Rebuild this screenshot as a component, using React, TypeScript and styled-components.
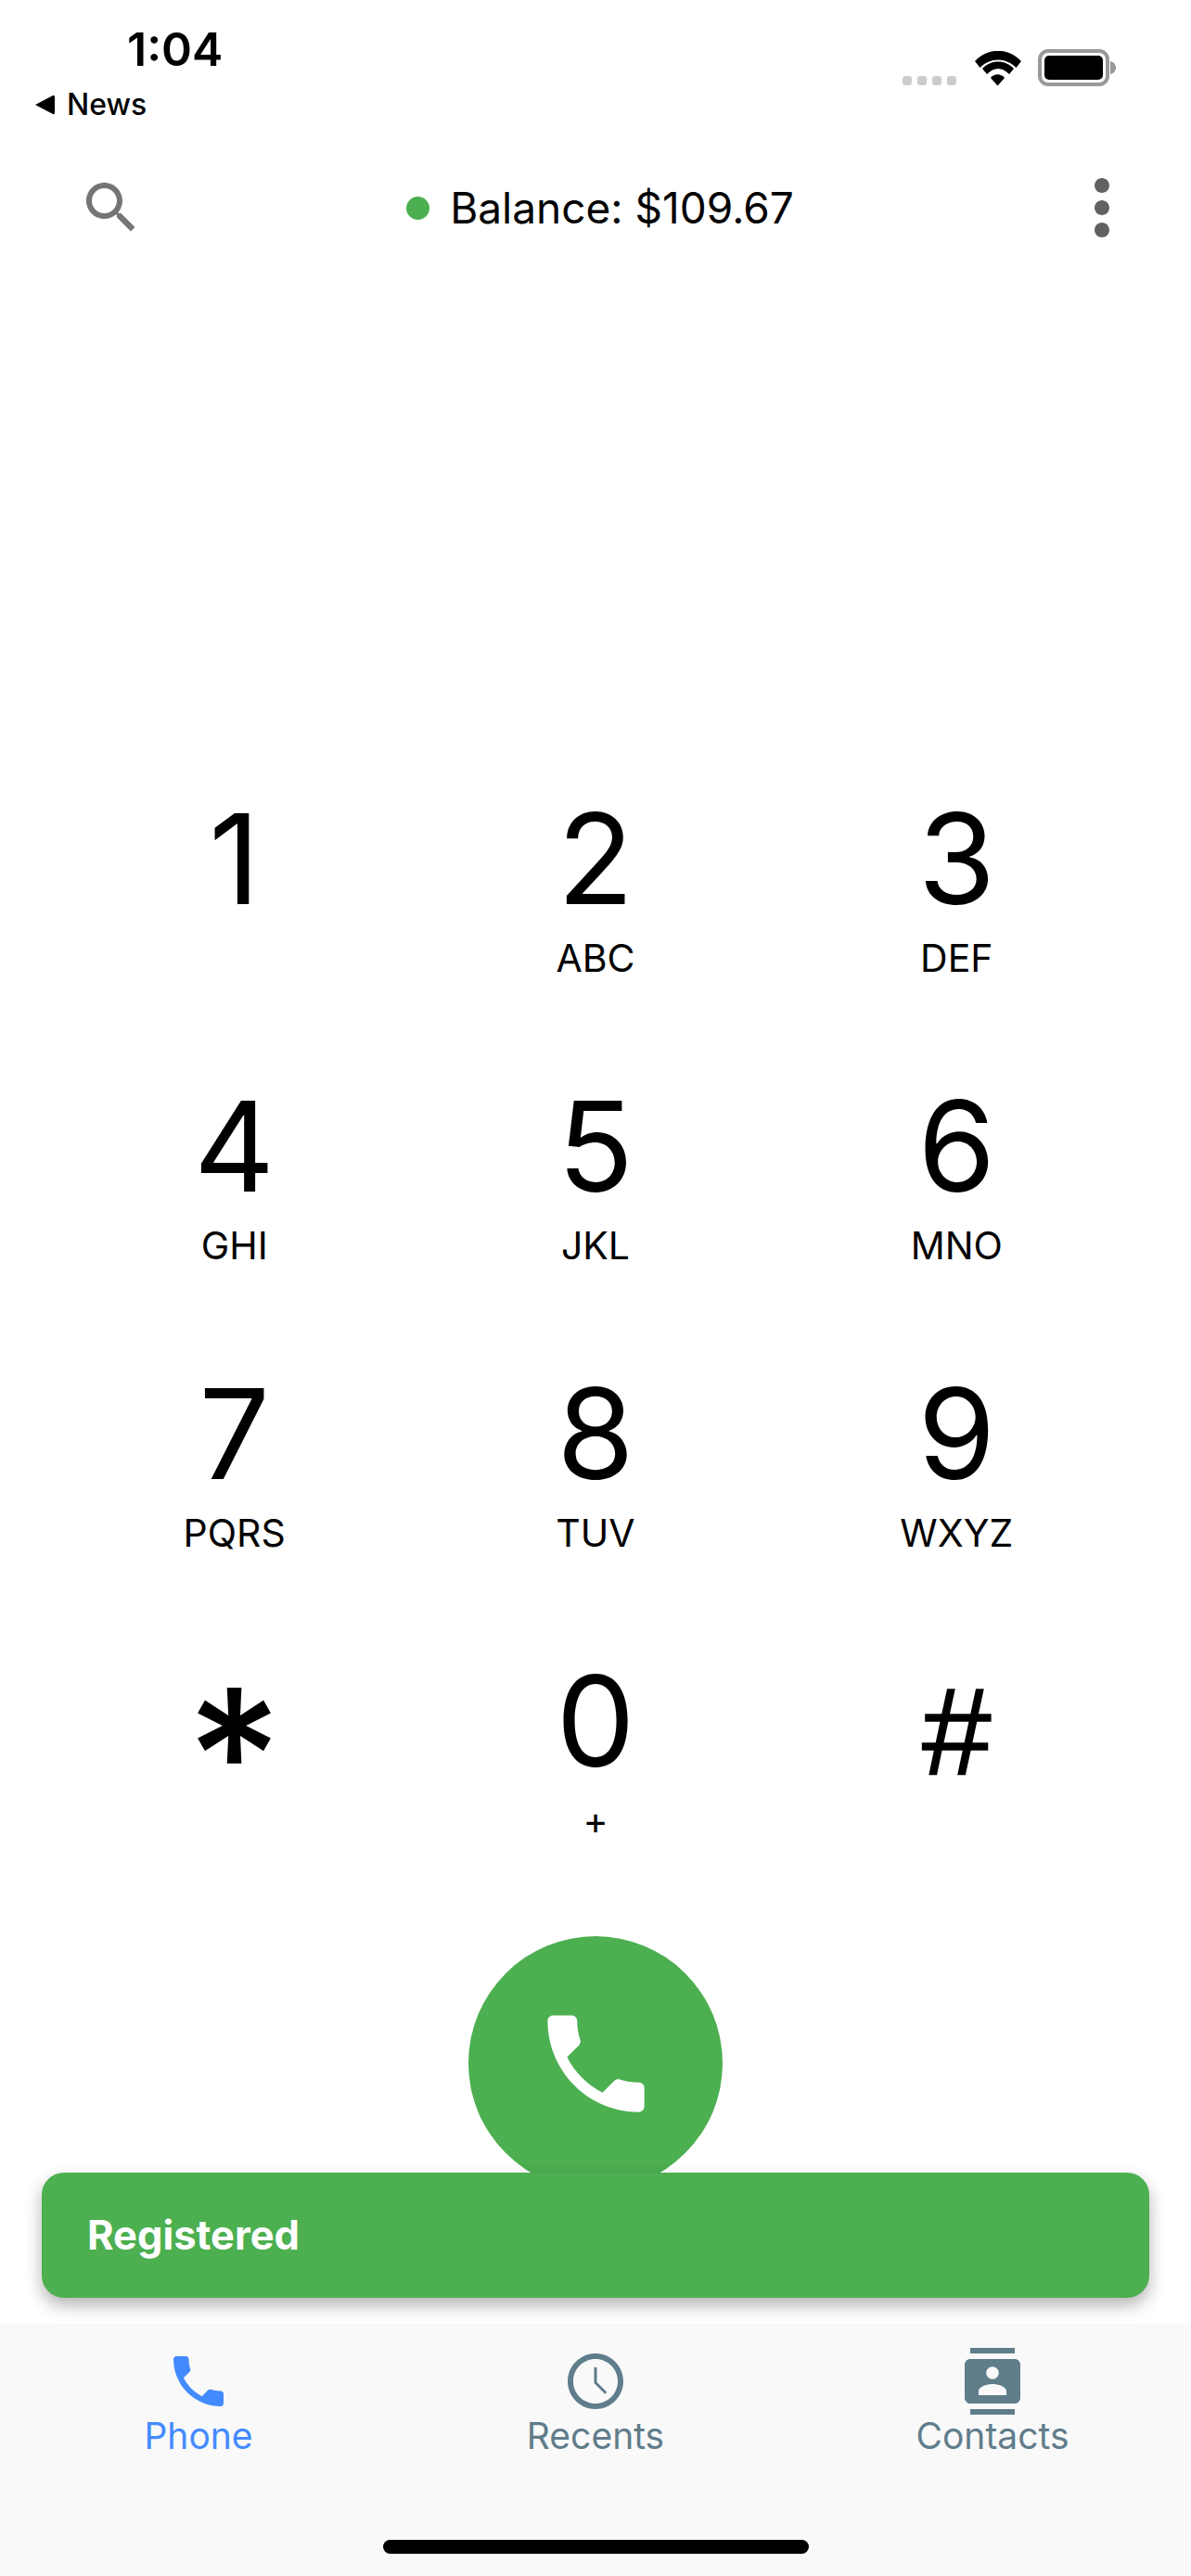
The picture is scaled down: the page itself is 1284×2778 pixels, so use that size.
import styled, { createGlobalStyle, css } from "styled-components";

const keys = [
  { digit: "1", letters: "" },
  { digit: "2", letters: "ABC" },
  { digit: "3", letters: "DEF" },
  { digit: "4", letters: "GHI" },
  { digit: "5", letters: "JKL" },
  { digit: "6", letters: "MNO" },
  { digit: "7", letters: "PQRS" },
  { digit: "8", letters: "TUV" },
  { digit: "9", letters: "WXYZ" },
  { digit: "*", letters: "" },
  { digit: "0", letters: "+" },
  { digit: "#", letters: "" },
];

const CALL_PATH =
  "M6.62 10.79c1.44 2.83 3.76 5.14 6.59 6.59l2.2-2.2c.27-.27.67-.36 1.02-.24 1.12.37 2.33.57 3.57.57.55 0 1 .45 1 1V20c0 .55-.45 1-1 1-9.39 0-17-7.61-17-17 0-.55.45-1 1-1h3.5c.55 0 1 .45 1 1 0 1.25.2 2.45.57 3.57.11.35.03.74-.25 1.02l-2.2 2.2z";

const Icon = ({ size, color, children }: { size: number; color: string; children: React.ReactNode }) => (
  <svg width={size} height={size} viewBox="0 0 24 24" fill={color}>
    {children}
  </svg>
);

const App = () => {
  return (
    <Page>
      <GlobalStyle />
      <StatusBar>
        <StatusLeft>
          <Time>1:04</Time>
          <BackLink>
            <svg width="22" height="22" viewBox="0 0 22 22">
              <path d="M0 11 L19 1 Q21 0 21 3 V19 Q21 22 19 21 Z" fill="#000" />
            </svg>
            News
          </BackLink>
        </StatusLeft>
        <StatusRight>
          <SignalDots>
            <i />
            <i />
            <i />
            <i />
          </SignalDots>
          <svg width="50" height="38" viewBox="0 0 50 38">
            <path d="M0 11 C14 -4 36 -4 50 11 L44.5 18 C33 6.5 17 6.5 5.5 18 Z" fill="#000" />
            <path d="M8 19 C17 9 33 9 42 19 L37 25 C29 17 21 17 13 25 Z" fill="#000" />
            <path d="M17 29 C21 24 28 24 32 29 L24.5 37.5 Z" fill="#000" />
          </svg>
          <svg width="84" height="40" viewBox="0 0 84 40">
            <rect x="2" y="2" width="73" height="36" rx="9" fill="#fff" stroke="#999" strokeWidth="4" />
            <rect x="7" y="7" width="63" height="26" rx="5" fill="#000" />
            <path d="M78 13 C82 14 84 17 84 20 C84 23 82 26 78 27 Z" fill="#999" />
          </svg>
        </StatusRight>
      </StatusBar>

      <TopBar>
        <Icon size={72} color="#757575">
          <path d="M15.5 14h-.79l-.28-.27C15.41 12.59 16 11.11 16 9.5 16 5.91 13.09 3 9.5 3S3 5.91 3 9.5 5.91 16 9.5 16c1.61 0 3.09-.59 4.23-1.57l.27.28v.79l5 4.99L20.49 19l-4.99-5zm-6 0C7.01 14 5 11.99 5 9.5S7.01 5 9.5 5 14 7.01 14 9.5 11.99 14 9.5 14z" />
        </Icon>
        <Balance>
          <OnlineDot />
          Balance: $109.67
        </Balance>
        <Icon size={96} color="#616161">
          <path d="M12 8c1.1 0 2-.9 2-2s-.9-2-2-2-2 .9-2 2 .9 2 2 2zm0 2c-1.1 0-2 .9-2 2s.9 2 2 2 2-.9 2-2-.9-2-2-2zm0 6c-1.1 0-2 .9-2 2s.9 2 2 2 2-.9 2-2-.9-2-2-2z" />
        </Icon>
      </TopBar>

      <Keypad>
        {keys.map((key) => (
          <Key key={key.digit}>
            <Digit $symbol={key.digit}>{key.digit}</Digit>
            <Letters>{key.letters}</Letters>
          </Key>
        ))}
      </Keypad>

      <CallButton>
        <Icon size={139} color="#fff">
          <path d={CALL_PATH} />
        </Icon>
      </CallButton>

      <Snackbar>Registered</Snackbar>

      <BottomNav>
        <NavItems>
          <NavItem $active>
            <Icon size={72} color="#448aff">
              <path d={CALL_PATH} />
            </Icon>
            Phone
          </NavItem>
          <NavItem>
            <Icon size={72} color="#607d8b">
              <path d="M11.99 2C6.47 2 2 6.48 2 12s4.47 10 9.99 10C17.52 22 22 17.52 22 12S17.52 2 11.99 2zM12 20c-4.42 0-8-3.58-8-8s3.58-8 8-8 8 3.58 8 8-3.58 8-8 8z" />
              <path d="M11.5 7h1v5.3l3.6 3.6-.7.7-3.9-3.9z" />
            </Icon>
            Recents
          </NavItem>
          <NavItem>
            <Icon size={72} color="#607d8b">
              <path d="M20 0H4v2h16V0zM4 24h16v-2H4v2zM20 4H4c-1.1 0-2 .9-2 2v12c0 1.1.9 2 2 2h16c1.1 0 2-.9 2-2V6c0-1.1-.9-2-2-2zm-8 2.75c1.24 0 2.25 1.01 2.25 2.25s-1.01 2.25-2.25 2.25S9.75 10.24 9.75 9 10.76 6.75 12 6.75zM17 17H7v-1.5c0-1.67 3.33-2.5 5-2.5s5 .83 5 2.5V17z" />
            </Icon>
            Contacts
          </NavItem>
        </NavItems>
        <HomeIndicator />
      </BottomNav>
    </Page>
  );
};

const GlobalStyle = createGlobalStyle`
  body {
    margin: 0;
    background: #fff;
    font-family: Inter, "Liberation Sans", sans-serif;
  }
`;

const Page = styled.div`
  position: relative;
  width: 1284px;
  height: 2778px;
  overflow: hidden;
  display: flex;
  flex-direction: column;
  background: #fff;
  color: #000;
`;

const StatusBar = styled.div`
  height: 174px;
  display: flex;
  justify-content: space-between;
  align-items: flex-start;
  padding: 24px 81px 0 38px;
  box-sizing: border-box;
`;

const StatusLeft = styled.div`
  display: flex;
  flex-direction: column;
  gap: 12px;
`;

const Time = styled.div`
  margin-left: 99px;
  font-size: 50px;
  line-height: 58px;
  font-weight: 600;
`;

const BackLink = styled.div`
  display: flex;
  align-items: center;
  gap: 12px;
  font-size: 32px;
  line-height: 38px;
  font-weight: 500;
`;

const StatusRight = styled.div`
  display: flex;
  align-items: flex-end;
  gap: 18px;
  padding-top: 29px;
`;

const SignalDots = styled.div`
  display: flex;
  gap: 6px;
  margin-right: 2px;
  padding-bottom: 1px;

  i {
    width: 10px;
    height: 10px;
    border-radius: 3px;
    background: #ccc;
  }
`;

const TopBar = styled.div`
  height: 100px;
  display: flex;
  align-items: center;
  justify-content: space-between;
  padding: 0 48px 0 84px;
`;

const Balance = styled.div`
  display: flex;
  align-items: center;
  gap: 22px;
  font-size: 46px;
  margin-right: 2px;
`;

const OnlineDot = styled.span`
  width: 25px;
  height: 25px;
  border-radius: 50%;
  background: #4caf50;
`;

const Keypad = styled.div`
  margin-top: 576px;
  padding: 0 58px;
  display: grid;
  grid-template-columns: repeat(3, 1fr);
  row-gap: 102px;
`;

const Key = styled.div`
  display: flex;
  flex-direction: column;
  align-items: center;
  gap: 8px;
`;

const digitVariant = ($symbol: string) => {
  if ($symbol === "*") {
    return css`
      font-size: 200px;
      font-weight: 500;
      line-height: 226px;
    `;
  }
  if ($symbol === "#") {
    return css`
      font-family: "Liberation Sans", sans-serif;
      font-size: 134px;
      line-height: 176px;
      -webkit-text-stroke: 1.5px #000;
    `;
  }
  return css`
    font-size: 135px;
    line-height: 152px;
  `;
};

const Digit = styled.div<{ $symbol: string }>`
  height: 150px;
  font-weight: 400;
  ${({ $symbol }) => digitVariant($symbol)}
`;

const Letters = styled.div`
  height: 50px;
  line-height: 50px;
  font-size: 41px;
`;

const CallButton = styled.div`
  width: 274px;
  height: 274px;
  margin: 100px auto 0;
  border-radius: 50%;
  background: #4caf50;
  display: flex;
  align-items: center;
  justify-content: center;
`;

const Snackbar = styled.div`
  position: absolute;
  left: 45px;
  right: 45px;
  bottom: 300px;
  height: 135px;
  padding: 0 0 2px 49px;
  box-sizing: border-box;
  display: flex;
  align-items: center;
  border-radius: 24px;
  background: #4caf50;
  box-shadow: 0 8px 18px rgba(0, 0, 0, 0.3);
  color: #fff;
  font-size: 43.5px;
  font-weight: 700;
`;

const BottomNav = styled.div`
  margin-top: auto;
  height: 272px;
  background: #f9f9f9;
  display: flex;
  flex-direction: column;
`;

const NavItems = styled.div`
  display: grid;
  grid-template-columns: repeat(3, 1fr);
  padding-top: 26px;
`;

const NavItem = styled.div<{ $active?: boolean }>`
  display: flex;
  flex-direction: column;
  align-items: center;
  font-size: 39px;
  line-height: 46px;
  color: ${({ $active }) => ($active ? "#448aff" : "#607d8b")};
`;

const HomeIndicator = styled.div`
  width: 459px;
  height: 15px;
  margin: auto auto 24px;
  border-radius: 8px;
  background: #000;
`;

export default App;
